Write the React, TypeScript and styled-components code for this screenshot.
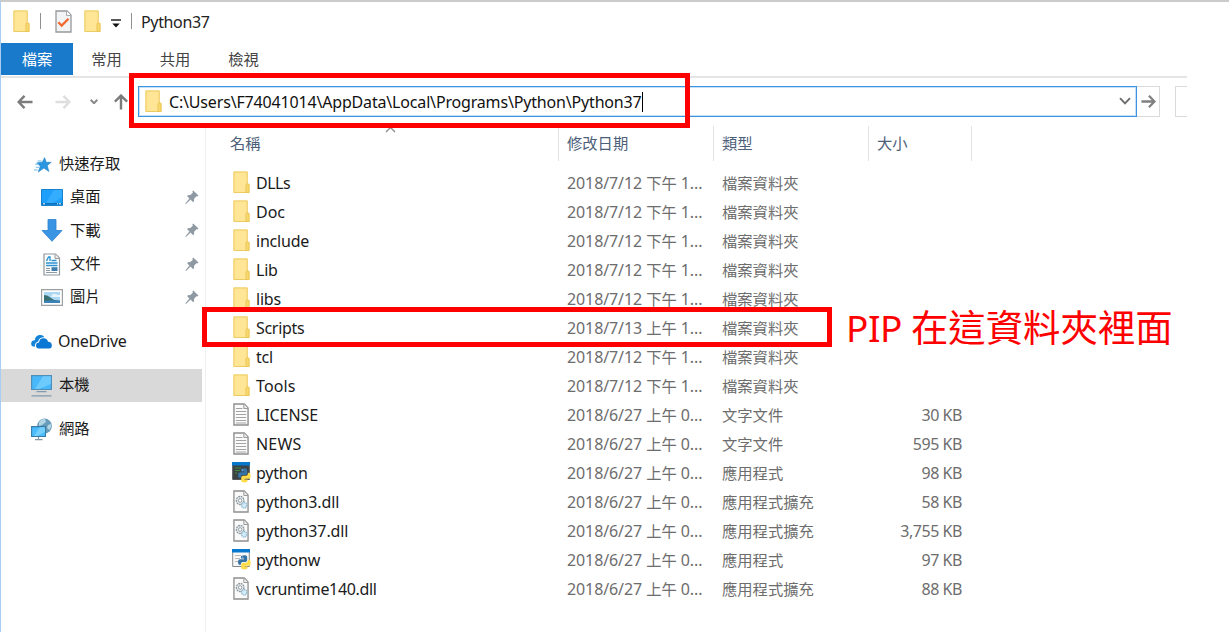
import React from 'react';
import styled, { createGlobalStyle } from 'styled-components';

const Global = createGlobalStyle`
  * { box-sizing: border-box; }
  body { margin: 0; background: #fff; overflow: hidden; }
`;

const latin = `'Noto Sans', 'Noto Sans CJK TC', sans-serif`;
const cjk = `'Noto Sans CJK TC', 'Noto Sans', sans-serif`;

const Window = styled.div`
  position: relative;
  width: 1229px;
  height: 632px;
  display: flex;
  flex-direction: column;
  overflow: hidden;
  border-top: 2px solid #cbcbc9;
  border-left: 1px solid #a9cdf0;
  background: #fff;
  color: #1b1b1b;
  font: 16px ${latin};
  white-space: pre;
  svg { display: block; flex: none; }
`;

const TitleBar = styled.div`
  display: flex;
  align-items: center;
  height: 41px;
  padding: 0 0 2px 12px;
`;
const TitleSep = styled.i<{ $left: number; $right: number }>`
  width: 1px;
  height: 16px;
  margin: 0 ${p => p.$right}px 1px ${p => p.$left}px;
  background: #8f8f8f;
`;
const Title = styled.span`
  letter-spacing: -0.35px;
  color: #222;
`;
const Gap = styled.i<{ $w: number }>`
  width: ${p => p.$w}px;
`;
const Lowered = styled.span`
  padding-top: 4px;
`;

const Tabs = styled.nav`
  display: flex;
  width: 1186px;
  height: 35px;
  border-bottom: 2px solid #e5e5e5;
`;
const Tab = styled.span<{ $active?: boolean; $w: number }>`
  width: ${p => p.$w}px;
  height: 32px;
  line-height: 30px;
  text-align: center;
  font-family: ${cjk};
  font-size: 15.3px;
  color: ${p => (p.$active ? '#fff' : '#444')};
  background: ${p => (p.$active ? '#1979ca' : 'transparent')};
`;

const NavBar = styled.div`
  display: flex;
  align-items: center;
  width: 1186px;
  height: 48px;
  padding: 0 0 1px 16px;
`;
const Address = styled.div`
  display: flex;
  align-items: center;
  width: 999px;
  height: 31px;
  margin-left: 9px;
  padding: 0 5px 0 6px;
  border: 1.5px solid #3b94df;
  outline: 1px solid #c5e0f7;
  outline-offset: -2px;
`;
const Path = styled.span`
  margin-left: 7px;
  letter-spacing: -0.17px;
  color: #111;
`;
const Caret = styled.i`
  width: 1px;
  height: 20px;
  background: #000;
`;
const Spacer = styled.i`
  flex: 1;
`;
const Go = styled.div`
  display: flex;
  align-items: center;
  justify-content: center;
  width: 23px;
  height: 31px;
  border: 1px solid #dadada;
  border-left: 0;
`;
const Search = styled.div`
  width: 12px;
  height: 31px;
  margin-left: 15px;
  border: 1px solid #dadada;
  border-right: 0;
`;

const Body = styled.div`
  display: flex;
  flex: 1;
`;
const Sidebar = styled.aside`
  width: 205px;
  padding-top: 22px;
  border-right: 1px solid #f1f1f1;
`;
const SideItem = styled.div<{ $child?: boolean; $selected?: boolean; $top?: number }>`
  display: flex;
  align-items: center;
  width: 201px;
  height: ${p => (p.$child ? 33.25 : 33)}px;
  margin-top: ${p => p.$top ?? 0}px;
  padding-left: ${p => (p.$child ? 40 : 30)}px;
  background: ${p => (p.$selected ? '#d9d9d9' : 'transparent')};
`;
const SideLabel = styled.span<{ $latin?: boolean }>`
  flex: 1;
  margin-left: ${p => (p.$latin ? 6 : 7)}px;
  padding-bottom: ${p => (p.$latin ? 2 : 4.5)}px;
  font-family: ${p => (p.$latin ? latin : cjk)};
  font-size: ${p => (p.$latin ? 16 : 15.3)}px;
  letter-spacing: ${p => (p.$latin ? -0.3 : 0)}px;
  line-height: 24px;
`;

const Files = styled.main`
  width: 767px;
`;
const Header = styled.div`
  display: grid;
  grid-template-columns: 353px 155px 155px 103px;
  height: 35px;
  margin-bottom: 7px;
`;
const HeadCell = styled.span<{ $indent: number }>`
  padding-left: ${p => p.$indent}px;
  border-right: 1px solid #e3e3e3;
  font-family: ${cjk};
  font-size: 15.3px;
  line-height: 32px;
  color: #4c607a;
`;
const FileRow = styled.div`
  display: grid;
  grid-template-columns: 26px 311px 155px 130px 110px;
  align-items: center;
  height: 29px;
  padding-left: 24px;
  color: #6d6d6d;
`;
const IconCell = styled.span<{ $wide: boolean }>`
  display: flex;
  padding-left: ${p => (p.$wide ? 1.5 : 3)}px;
`;
const Name = styled.span<{ $ls: number }>`
  padding-top: 1px;
  color: #1b1b1b;
  letter-spacing: ${p => p.$ls}px;
`;
const DateText = styled.span`
  padding-bottom: 2px;
  letter-spacing: -0.1px;
`;
const Han = styled.span`
  font-family: ${cjk};
  font-size: 15.3px;
  letter-spacing: 0;
  line-height: 24px;
`;
const TypeText = styled(Han)`
  padding-bottom: 2px;
`;
const Size = styled.span`
  padding-top: 1px;
  text-align: right;
  letter-spacing: -0.45px;
`;

const Highlight = styled.div<{ $x: number; $y: number; $w: number; $h: number }>`
  position: absolute;
  left: ${p => p.$x - 1}px;
  top: ${p => p.$y - 2}px;
  width: ${p => p.$w}px;
  height: ${p => p.$h}px;
  border: 5px solid #fe0000;
`;
const Note = styled.div`
  position: absolute;
  left: 845px;
  top: 298px;
  color: #fe0000;
  font: 37px/52px ${latin};
  letter-spacing: -0.5px;
`;
const NoteHan = styled.span`
  font-family: ${cjk};
  font-size: 37.4px;
  letter-spacing: 0;
`;
const SortMark = styled.svg`
  position: absolute;
  left: 384px;
  top: 124px;
`;

const Folder = () => (
  <svg width="17" height="22.5" viewBox="0 0 18 23" preserveAspectRatio="none">
    <path d="M.5.5H15.5V13H17.5V22.5H.5Z" fill="#fbdf86" />
    <path d="M1 1H15V22H1Z" fill="#ffe596" stroke="#eccb62" />
    <path d="M13.7 22V14.2Q13.7 13.2 15.3 13.2T17 14.2V22Z" fill="#f8d96f" stroke="#e8c352" strokeWidth=".9" />
  </svg>
);
const TextFile = () => (
  <svg width="16" height="23" viewBox="0 0 17 23" preserveAspectRatio="none">
    <path d="M1 1H12L16 5V22H1Z" fill="#fbfbfb" stroke="#8f8f8f" strokeWidth="1.5" />
    <path d="M11.5 1V5.5H16" fill="#eee" stroke="#999" />
    <path d="M3 5.5H10M3 8.5H14M3 11.5H14M3 14.5H14M3 17.5H14M3 20H14" stroke="#a3a3a3" strokeWidth="1.2" />
  </svg>
);
const DllFile = () => (
  <svg width="16" height="23" viewBox="0 0 17 23" preserveAspectRatio="none">
    <path d="M1 1H12L16 5V22H1Z" fill="#fafafa" stroke="#8f8f8f" strokeWidth="1.4" />
    <path d="M11.5 1V5.5H16" fill="#eee" stroke="#999" />
    <circle cx="7.6" cy="10.5" r="4" fill="#edf0f1" stroke="#8d9aa1" strokeWidth="1.4" strokeDasharray="2 .7" />
    <circle cx="7.6" cy="10.5" r="1.8" fill="#fff" stroke="#8b989f" />
    <circle cx="11.9" cy="15.3" r="2.8" fill="#d3ebf8" stroke="#91bbd2" strokeWidth="1.3" strokeDasharray="1.5 .6" />
  </svg>
);
const PythonFile = ({ light }: { light?: boolean }) => (
  <svg width="20" height="22" viewBox="0 0 20 22">
    <path d="M.7 1H17.3V17.5H.7Z" fill={light ? '#f8f8f8' : '#3c4143'} stroke={light ? '#85898c' : '#535759'} />
    <path d="M0 0H18V3.5H0Z" fill="#0878cf" />
    {light ? (
      <path d="M3 6.5H9M3 9.5H8M3 12.5H6" stroke="#b9b9b9" />
    ) : (
      <path d="M3 6H9M3 8.5H8M3 11H5" stroke="#3d8a40" strokeWidth="1.2" />
    )}
    <g transform="translate(.8 1.4) scale(.9)">
      <path d="M12.8 5.5C16 5.5 16 6.5 16 8.5V11Q16 13 13.8 13H11Q9 13 9 15V16H8Q5.8 16 5.8 12.8T8.2 9.7H12.5V9H9V7.5Q9 5.5 12.8 5.5Z" fill="#3673a5" />
      <path d="M12.8 21.2C9.5 21.2 9.4 20 9.4 18.3V15.8Q9.4 13.8 11.6 13.8H14.7Q16.7 13.8 16.7 11.6V10.4H17.6Q19.8 10.4 19.8 13.9T17.5 17.1H13V17.8H16.5V19.1Q16.5 21.2 12.8 21.2Z" fill="#ffdc4a" />
      <circle cx="11" cy="7.4" r=".7" fill="#a9c7df" />
    </g>
  </svg>
);
const CheckDoc = () => (
  <svg width="17" height="23" viewBox="0 0 17 23">
    <path d="M1 1H12L16 5V22H1Z" fill="#f3f4f6" stroke="#97999c" strokeWidth="1.3" />
    <path d="M11.5 1V5.5H16" fill="#fff" stroke="#aaa" />
    <path d="M3.3 12.2L6.7 15.6L13.5 8.7" fill="none" stroke="#f0692d" strokeWidth="2.3" />
  </svg>
);
const Customize = () => (
  <svg width="10" height="9" viewBox="0 0 10 9">
    <path d="M0 1H10" stroke="#222" strokeWidth="1.5" />
    <path d="M1.3 4.4H8.7L5 8.4Z" fill="#111" />
  </svg>
);
const Arrow = ({ dir, color, w = 16 }: { dir: 'left' | 'right' | 'up'; color: string; w?: number }) => {
  const turn = { left: 0, right: 180, up: 90 }[dir];
  return (
    <svg width={w} height={w} viewBox="0 0 17 17">
      <path d="M16.5 8.5H1.8M8 2L1.7 8.5L8 15" transform={`rotate(${turn} 8.5 8.5)`} fill="none" stroke={color} strokeWidth="2.6" />
    </svg>
  );
};
const Chevron = ({ w, color }: { w: number; color: string }) => (
  <svg width={w} height={w * 0.67} viewBox="0 0 12 8">
    <path d="M1 1.2L6 6.4L11 1.2" fill="none" stroke={color} strokeWidth={w < 10 ? 3 : 1.9} />
  </svg>
);
const Pin = () => (
  <svg width="14" height="15" viewBox="0 0 14 15">
    <path d="M8.2.5L13.5 5.6L12.2 6.6L11.4 6.3L9.1 8.8Q9.5 11.2 8.2 12.2L5.5 9.5L1 14L.3 13.5L4.4 8.4L2 6Q3.3 4.8 5.4 5.1L7.8 2.8L7.4 1.6Z" fill="#8e99a3" />
  </svg>
);

const Star = () => (
  <svg width="18" height="16" viewBox="0 0 20 17">
    <path d="M11.8.3L13.6 5.5H19.1L14.8 9L16.5 15.8L11 11.9L4.7 16.4L7 9.8L3.3 6L9.2 5.5Z" fill="#2b97e0" stroke="#1b7dc4" strokeWidth=".6" />
    <path d="M4 4H8.5M1.5 7.5H5M2 11H6M0 14H4" stroke="#70bbec" strokeWidth="1.2" />
  </svg>
);
const Desktop = () => (
  <svg width="22" height="17" viewBox="0 0 22 17">
    <path d="M.5.5H21.5V16.5H.5Z" fill="#1d9ffb" stroke="#1681ce" />
    <path d="M13 1H21V8L12 14H5Z" fill="#35adff" />
    <path d="M1 14.8H21" stroke="#0e6fb9" strokeWidth="1.6" />
    <path d="M2 14.8H4M16 14.8H17M18 14.8H20" stroke="#fff" />
  </svg>
);
const Download = () => (
  <svg width="22" height="23" viewBox="0 0 22 23">
    <path d="M7 .5H15V11.5H21L11 22.3L1 11.5H7Z" fill="#3a94e4" stroke="#2c80cf" strokeWidth=".8" />
  </svg>
);
const Document = () => (
  <svg width="22" height="23" viewBox="0 0 22 23">
    <path d="M3 1H14.5L18.5 5V22H3Z" fill="#fff" stroke="#91979c" strokeWidth="1.2" />
    <path d="M14 1V5.5H18.5" fill="#eee" stroke="#999" />
    <path d="M5.5 8L7.5 4H9V8M10.5 7.5H15.5M5 10H16.5M5 12.5H16.5" fill="none" stroke="#2c93d2" strokeWidth="1.4" />
    <path d="M5 15.5H9M5 17.5H9M5 19.5H16" stroke="#8e9ba5" />
    <path d="M10.5 14.2H16.5V18H10.5Z" fill="#3e7dac" />
  </svg>
);
const Pictures = () => (
  <svg width="22" height="17" viewBox="0 0 22 17">
    <path d="M.6.6H21.4V16.4H.6Z" fill="#fff" stroke="#9ca0a3" strokeWidth="1.2" />
    <path d="M3 3H19V14H3Z" fill="#a9d7f4" />
    <path d="M3 6Q7 6 10 9T19 11.5V14H3Z" fill="#386f70" />
    <path d="M3 12Q11 10.5 19 12V14H3Z" fill="#3a82b9" />
    <path d="M11 6Q13 4 15 5.5L19 6V8H10Z" fill="#eaf5fb" />
  </svg>
);
const OneDrive = () => (
  <svg width="21" height="15" viewBox="0 0 21 15">
    <path d="M3.8 12.8Q0 12.5.2 9.4T3.8 6.2Q4.2 2 8 1.1T13.4 3.2Q8.2 3 7.2 7.4Q3.6 8.2 3.8 12.8Z" fill="#1384d8" />
    <path d="M8 14.5Q5 14.3 5 11.5T8 8.5Q8.5 4.3 12.4 4.2T17 7.7Q20.7 7.6 20.8 11.2T17.8 14.5Z" fill="#0878d4" />
  </svg>
);
const Computer = () => (
  <svg width="21" height="22" viewBox="0 0 21 22">
    <path d="M.6.7H20.4V14.5H.6Z" fill="#48b8fa" stroke="#4e8eb8" strokeWidth="1.2" />
    <path d="M12 1.3H19.8V9L8 13.9H4Z" fill="#6dcafc" />
    <path d="M5.5 16.7H15.5M.5 20.8H20.5" stroke="#829aad" strokeWidth="1.3" />
  </svg>
);
const Network = () => (
  <svg width="21" height="23" viewBox="0 0 21 23">
    <circle cx="13.5" cy="8" r="7.4" fill="#679bb9" />
    <path d="M8 4Q11 0 14 .8L15 4L11 7L8 8ZM17 7L20 6Q21 9 18.5 12L16 10Z" fill="#b4d5e3" />
    <path d="M.6 8.6H14.5V18.5H.6Z" fill="#4bbdfc" stroke="#377ba5" strokeWidth="1.1" />
    <path d="M9 9.2H14V14L6 18H3Z" fill="#74cffd" />
    <path d="M7.5 19V21.5M4 21.7H11.5" stroke="#8398a6" strokeWidth="1.2" />
  </svg>
);

const places = [
  { label: '桌面', icon: <Desktop /> },
  { label: '下載', icon: <Download /> },
  { label: '文件', icon: <Document /> },
  { label: '圖片', icon: <Pictures /> },
];

type Kind = 'folder' | 'text' | 'exe' | 'exew' | 'dll';
const icons: Record<Kind, React.ReactNode> = {
  folder: <Folder />,
  text: <TextFile />,
  exe: <PythonFile />,
  exew: <PythonFile light />,
  dll: <DllFile />,
};
const types: Record<Kind, string> = {
  folder: '檔案資料夾',
  text: '文字文件',
  exe: '應用程式',
  exew: '應用程式',
  dll: '應用程式擴充',
};
const files: { name: string; kind: Kind; size?: string; day?: string; ls?: number }[] = [
  { name: 'DLLs', kind: 'folder', day: '12', ls: -0.5 },
  { name: 'Doc', kind: 'folder', day: '12', ls: 0 },
  { name: 'include', kind: 'folder', day: '12' },
  { name: 'Lib', kind: 'folder', day: '12' },
  { name: 'libs', kind: 'folder', day: '12' },
  { name: 'Scripts', kind: 'folder', day: '13', ls: -0.3 },
  { name: 'tcl', kind: 'folder', day: '12' },
  { name: 'Tools', kind: 'folder', day: '12', ls: 0.1 },
  { name: 'LICENSE', kind: 'text', size: '30 KB', ls: -0.1 },
  { name: 'NEWS', kind: 'text', size: '595 KB', ls: 0.2 },
  { name: 'python', kind: 'exe', size: '98 KB' },
  { name: 'python3.dll', kind: 'dll', size: '58 KB', ls: -0.1 },
  { name: 'python37.dll', kind: 'dll', size: '3,755 KB', ls: -0.1 },
  { name: 'pythonw', kind: 'exew', size: '97 KB' },
  { name: 'vcruntime140.dll', kind: 'dll', size: '88 KB', ls: -0.33 },
];

export default function App() {
  return (
    <>
      <Global />
      <Window>
        <TitleBar>
          <Folder />
          <TitleSep $left={10} $right={14} />
          <CheckDoc />
          <Gap $w={12} />
          <Folder />
          <Gap $w={10} />
          <Lowered>
            <Customize />
          </Lowered>
          <TitleSep $left={10} $right={9} />
          <Title>Python37</Title>
        </TitleBar>
        <Tabs>
          <Tab $active $w={72}>檔案</Tab>
          <Tab $w={67}>常用</Tab>
          <Tab $w={70}>共用</Tab>
          <Tab $w={67}>檢視</Tab>
        </Tabs>
        <NavBar>
          <Arrow dir="left" color="#7c7c7c" />
          <Gap $w={22} />
          <Arrow dir="right" color="#dedede" />
          <Gap $w={19} />
          <Chevron w={8} color="#8a8a8a" />
          <Gap $w={15} />
          <Arrow dir="up" color="#7c7c7c" />
          <Address>
            <Folder />
            <Path>C:\Users\F74041014\AppData\Local\Programs\Python\Python37</Path>
            <Caret />
            <Spacer />
            <Chevron w={12} color="#6c6c6c" />
          </Address>
          <Go>
            <Arrow dir="right" color="#808080" w={15} />
          </Go>
          <Search />
        </NavBar>
        <Body>
          <Sidebar>
            <SideItem>
              <Gap $w={3} />
              <Star />
              <SideLabel>快速存取</SideLabel>
            </SideItem>
            {places.map(p => (
              <SideItem key={p.label} $child>
                {p.icon}
                <SideLabel>{p.label}</SideLabel>
                <Pin />
                <Gap $w={3} />
              </SideItem>
            ))}
            <SideItem $top={11}>
              <OneDrive />
              <SideLabel $latin>OneDrive</SideLabel>
            </SideItem>
            <SideItem $top={11} $selected>
              <Computer />
              <SideLabel>本機</SideLabel>
            </SideItem>
            <SideItem $top={11}>
              <Network />
              <SideLabel>網路</SideLabel>
            </SideItem>
          </Sidebar>
          <Files>
            <Header>
              <HeadCell $indent={24}>名稱</HeadCell>
              <HeadCell $indent={8}>修改日期</HeadCell>
              <HeadCell $indent={8}>類型</HeadCell>
              <HeadCell $indent={8}>大小</HeadCell>
            </Header>
            {files.map(f => (
              <FileRow key={f.name}>
                <IconCell $wide={f.kind.startsWith('exe')}>{icons[f.kind]}</IconCell>
                <Name $ls={f.ls ?? -0.2}>{f.name}</Name>
                <DateText>
                  {f.day ? `2018/7/${f.day} ` : '2018/6/27 '}
                  <Han>{f.day === '12' ? '下午' : '上午'}</Han>
                  {f.day ? ' 1...' : ' 0...'}
                </DateText>
                <TypeText>{types[f.kind]}</TypeText>
                <Size>{f.size}</Size>
              </FileRow>
            ))}
          </Files>
        </Body>
        <SortMark width="11" height="7" viewBox="0 0 11 7">
          <path d="M1 6L5.5 1.5L10 6" fill="none" stroke="#8a8a8a" strokeWidth="1.3" />
        </SortMark>
        <Highlight $x={129} $y={73} $w={561} $h={55} />
        <Highlight $x={202} $y={307} $w={630} $h={40} />
        <Note>
          PIP <NoteHan>在這資料夾裡面</NoteHan>
        </Note>
      </Window>
    </>
  );
}
